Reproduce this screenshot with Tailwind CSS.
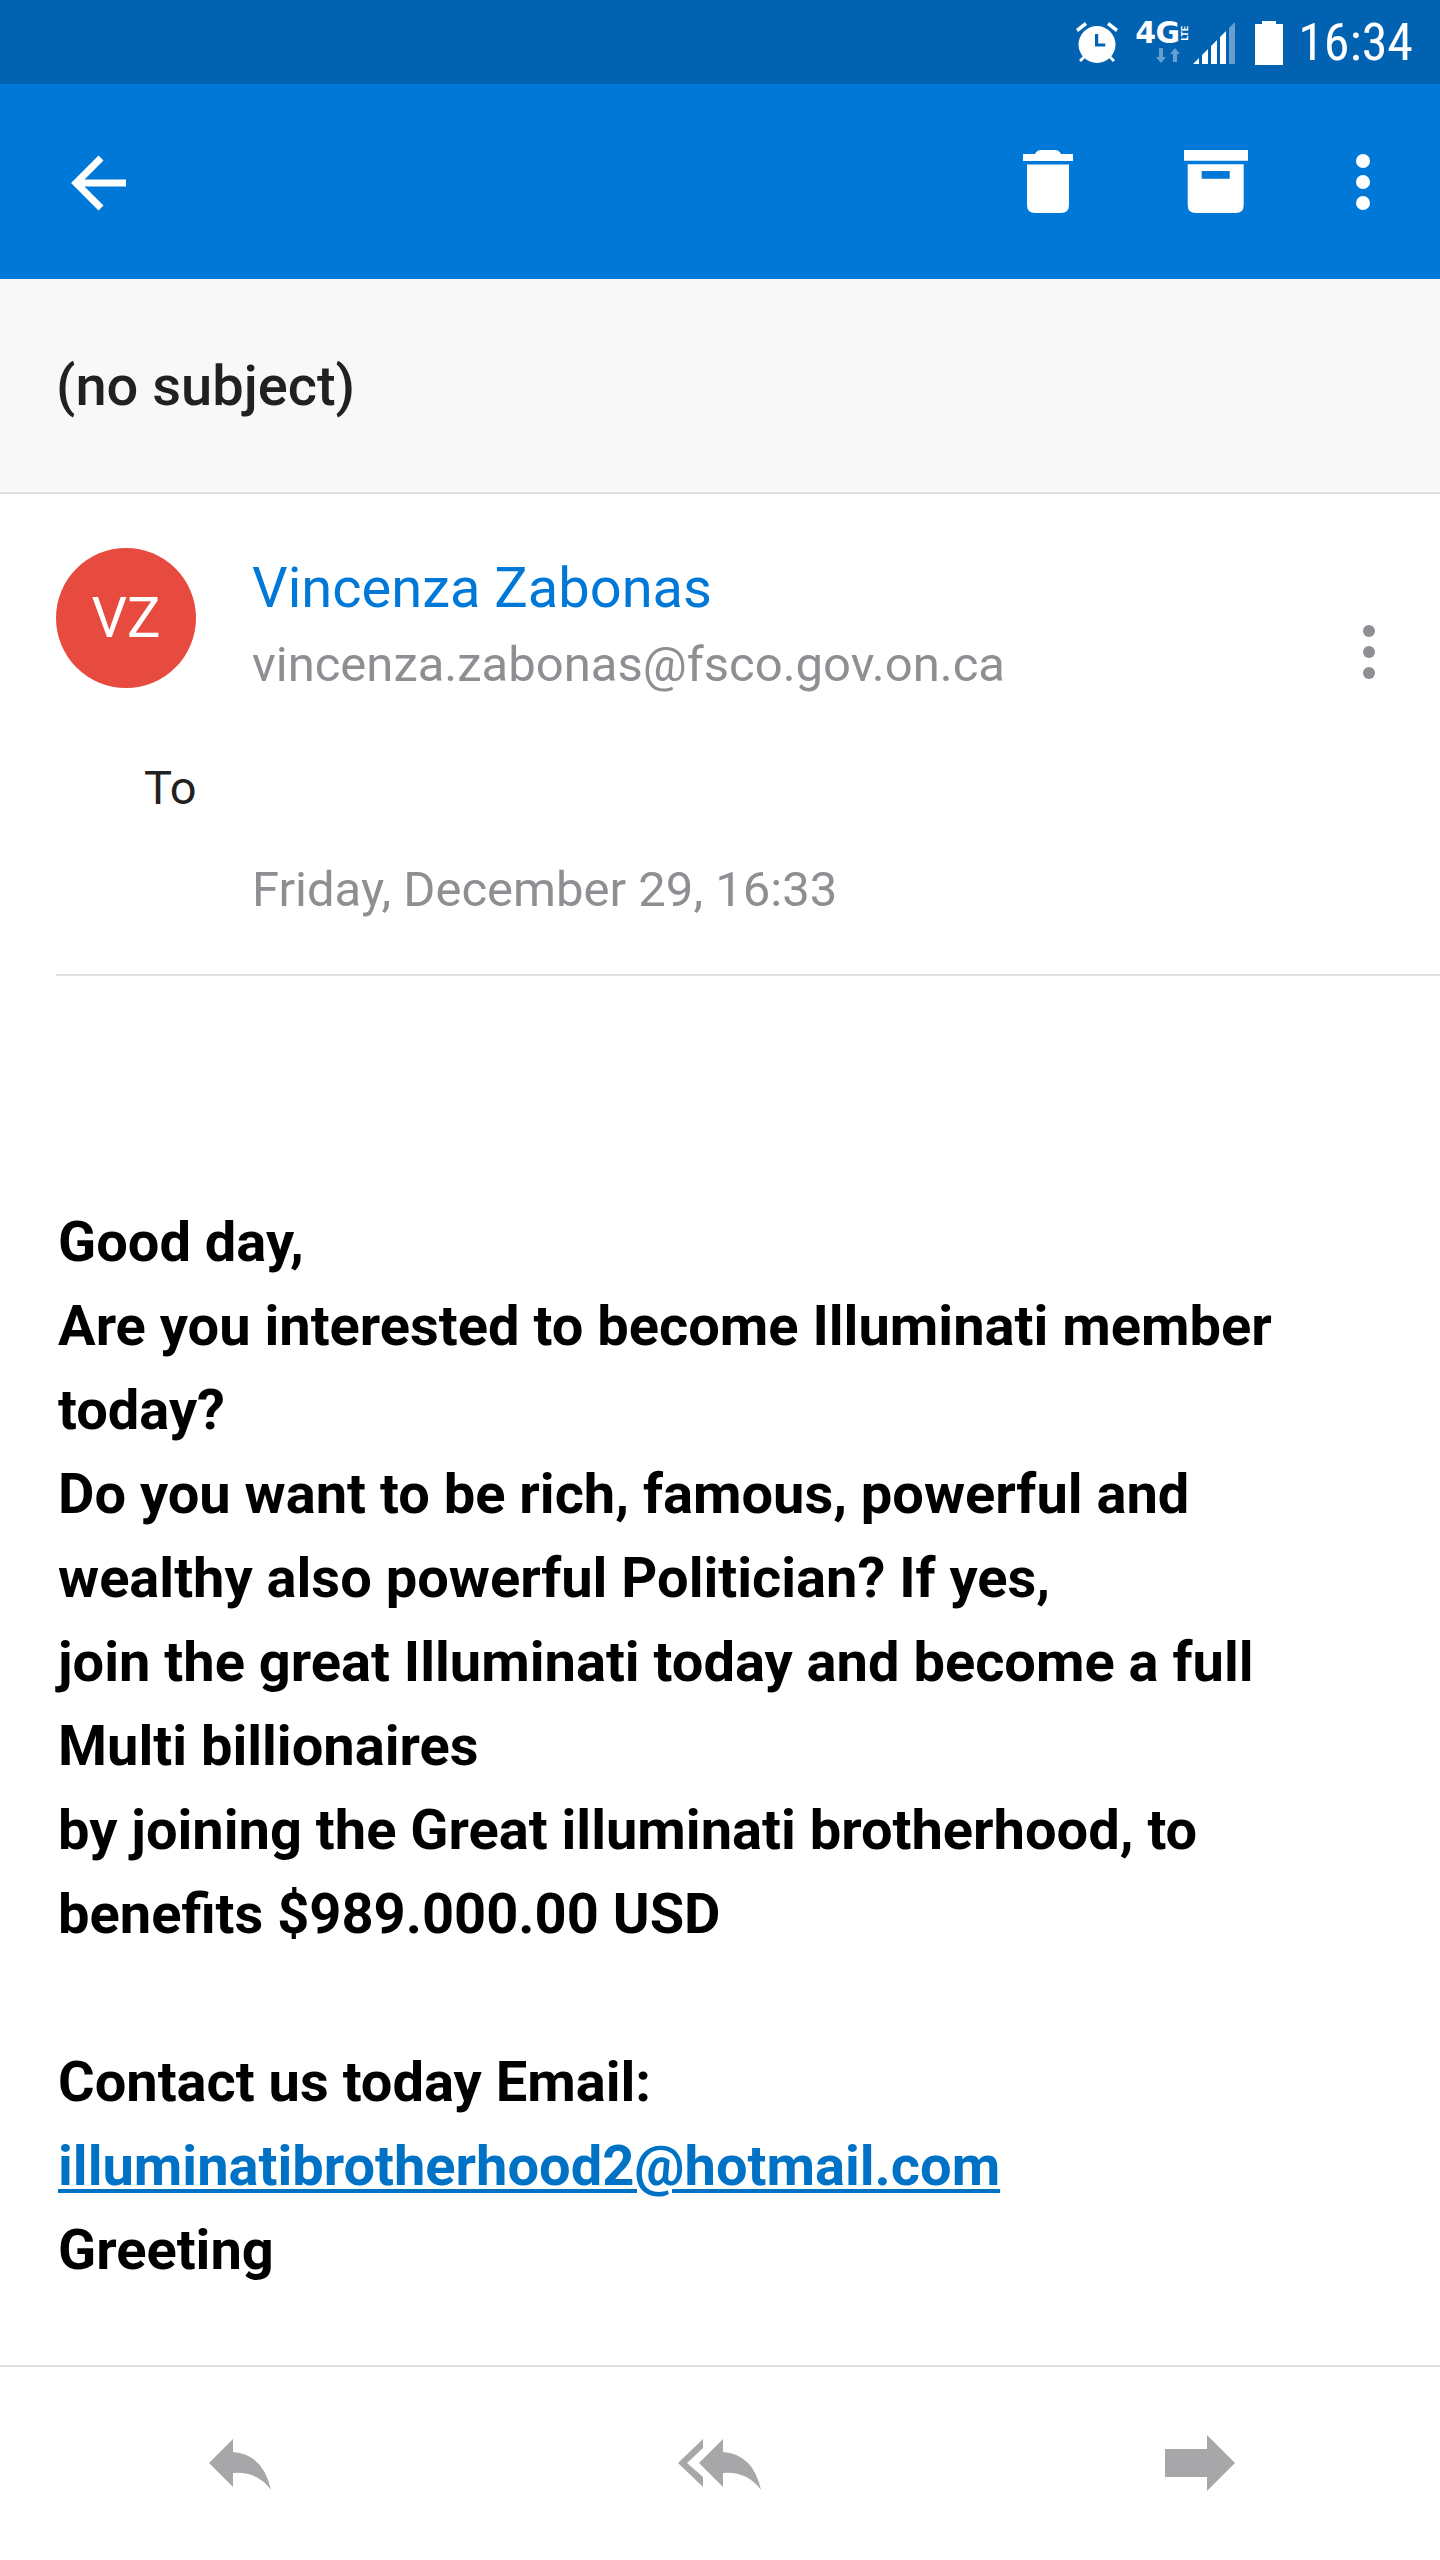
<!DOCTYPE html>
<html lang="en">

<head>
    <meta charset="UTF-8">
    <title>Mail</title>
    <script src="https://cdn.jsdelivr.net/npm/@tailwindcss/browser@4"></script>
</head>

<body class="bg-white font-['Roboto',sans-serif]">
    <div class="w-[1440px] h-[2560px] flex flex-col overflow-hidden">

        <!-- status bar -->
        <div class="h-[84px] bg-[#0062b1] flex items-center justify-end pr-[27px] pt-[2px] text-white shrink-0">
            <svg class="w-[42px] h-[42px] mr-[17px]" viewBox="0 0 42 42" fill="#fff">
                <circle cx="21" cy="22.5" r="18.5" />
                <path d="M0 7 9 0l2 3-9 7ZM42 7 33 0l-2 3 9 7ZM3 38l5-5 2 2-5 5ZM39 38l-5-5-2 2 5 5Z" />
                <path d="M19 12h3.200v9.500h7v3H19Z" fill="#0062b1" />
            </svg>
            <div class="w-[52px] h-[42px] mr-[6px] flex flex-col">
                <div class="h-[22px] flex items-center">
                    <span class="text-[30px] leading-[22px] font-bold font-['DejaVu_Sans',sans-serif] tracking-[-0.5px]">4G</span>
                    <span class="text-[9px] leading-[8px] font-bold [writing-mode:vertical-rl] rotate-180 ml-[1px]">LTE</span>
                </div>
                <svg class="w-[42px] h-[16px] ml-[13px] mt-[4px]" viewBox="0 0 26 16" fill="#fff" fill-opacity=".4">
                    <path d="M3 0h4v9h3l-5 6-5-6h3ZM17 14h4V6h3l-5-6-5 6h3Z" />
                </svg>
            </div>
            <svg class="w-[44px] h-[44px] mr-[18px]" viewBox="0 0 44 44" fill="#fff">
                <path d="M0 43 6 37v6ZM9 34l6-6v15H9ZM18 25l6-6v24h-6ZM27 16l6-6v33h-6Z" />
                <path d="M36 7l6-6v42h-6Z" fill-opacity=".4" />
            </svg>
            <svg class="w-[28px] h-[44px] mr-[15px]" viewBox="0 0 28 44" fill="#fff">
                <path d="M7 0h14v3h7v41H0V3h7Z" />
            </svg>
            <span class="text-[52px] leading-none font-['Roboto_Condensed','Roboto',sans-serif]">16:34</span>
        </div>

        <!-- action bar -->
        <div class="h-[195px] bg-[#0078d7] flex items-center pl-[68px] shrink-0">
            <svg class="w-[60px] h-[60px]" viewBox="0 0 60 60" fill="none" stroke="#fff" stroke-width="7">
                <path d="M58 31H9M33 6 8 31l25 25" />
            </svg>
            <svg class="w-[50px] h-[63px] ml-[895px]" viewBox="0 0 50 63" fill="#fff">
                <path d="M0 4h12q2-4 6-4h14q4 0 6 4h12v7H0ZM4 14.500h42V55q0 8-8 8H12q-8 0-8-8Z" />
            </svg>
            <svg class="w-[64px] h-[63px] ml-[111px]" viewBox="0 0 64 63" fill="#fff">
                <path fill-rule="evenodd" d="M0 0h64v10.700H0ZM3.700 14.300h56V55q0 8-8 8h-40q-8 0-8-8ZM17.700 21v7.700h28V21Z" />
            </svg>
            <div class="ml-[108px] flex flex-col gap-[7px]">
                <div class="w-[14px] h-[14px] rounded-full bg-white"></div>
                <div class="w-[14px] h-[14px] rounded-full bg-white"></div>
                <div class="w-[14px] h-[14px] rounded-full bg-white"></div>
            </div>
        </div>

        <!-- subject -->
        <div class="h-[215px] bg-[#f8f8f8] border-b-2 border-[#e0e0e0] flex items-center pl-[56px] shrink-0">
            <h1 class="text-[56px] leading-none font-medium text-[#212121]">(no subject)</h1>
        </div>

        <!-- sender -->
        <div class="ml-[56px] h-[482px] border-b-2 border-[#e0e0e0] shrink-0 flex flex-col">
            <div class="flex pt-[54px]">
                <div class="w-[140px] h-[140px] rounded-full bg-[#e74a3f] text-white text-[56px] flex items-center justify-center shrink-0">VZ</div>
                <div class="ml-[56px] flex-1">
                    <div class="text-[#0078d7] text-[56px] leading-[60px] mt-[10px]">Vincenza Zabonas</div>
                    <div class="text-[#8e8e93] text-[49px] leading-[60px] mt-[17px]">vincenza.zabonas@fsco.gov.on.ca</div>
                </div>
                <div class="flex flex-col gap-[9px] mt-[77px] mr-[65px]">
                    <div class="w-[12px] h-[12px] rounded-full bg-[#8e8e93]"></div>
                    <div class="w-[12px] h-[12px] rounded-full bg-[#8e8e93]"></div>
                    <div class="w-[12px] h-[12px] rounded-full bg-[#8e8e93]"></div>
                </div>
            </div>
            <div class="text-[47px] leading-[60px] text-[#212121] ml-[88px] mt-[63px]">To</div>
            <div class="text-[49px] leading-[60px] text-[#8e8e93] ml-[196px] mt-[42px]">Friday, December 29, 16:33</div>
        </div>

        <!-- body -->
        <div class="pl-[58px] pt-[224px] text-[56px] leading-[84px] font-bold text-black flex-1">
            <div>Good day,</div>
            <div>Are you interested to become Illuminati member<br>today?</div>
            <div>Do you want to be rich, famous, powerful and<br>wealthy also powerful Politician? If yes,</div>
            <div>join the great Illuminati today and become a full<br>Multi billionaires</div>
            <div>by joining the Great illuminati brotherhood, to<br>benefits $989.000.00 USD</div>
            <div class="mt-[84px]">Contact us today Email:</div>
            <a class="block text-[#0072c6] underline decoration-[4px] underline-offset-[4px]">illuminatibrotherhood2@hotmail.com</a>
            <div>Greeting</div>
        </div>

        <!-- bottom actions -->
        <div class="h-[195px] border-t-2 border-[#e0e0e0] flex items-start shrink-0 pl-[209px] pt-[72px]">
            <svg class="w-[62px] h-[51px]" viewBox="0 0 62 51" fill="#a7a7aa">
                <path d="M0 24 24 0v13Q54 15 62 51 48 32 24 34v14Z" />
            </svg>
            <svg class="w-[83px] h-[51px] ml-[407px]" viewBox="0 0 83 51" fill="#a7a7aa">
                <path d="M0 24 25 0v9L9 24l16 14v10Z" />
                <path d="M21 24 45 0v13Q75 15 83 51 69 32 45 34v14Z" />
            </svg>
            <svg class="w-[70px] h-[56px] ml-[404px] -mt-[4px]" viewBox="0 0 70 56" fill="#a7a7aa">
                <path d="M0 14H42V0L70 28 42 56V42H0Z" />
            </svg>
        </div>
    </div>
</body>

</html>
